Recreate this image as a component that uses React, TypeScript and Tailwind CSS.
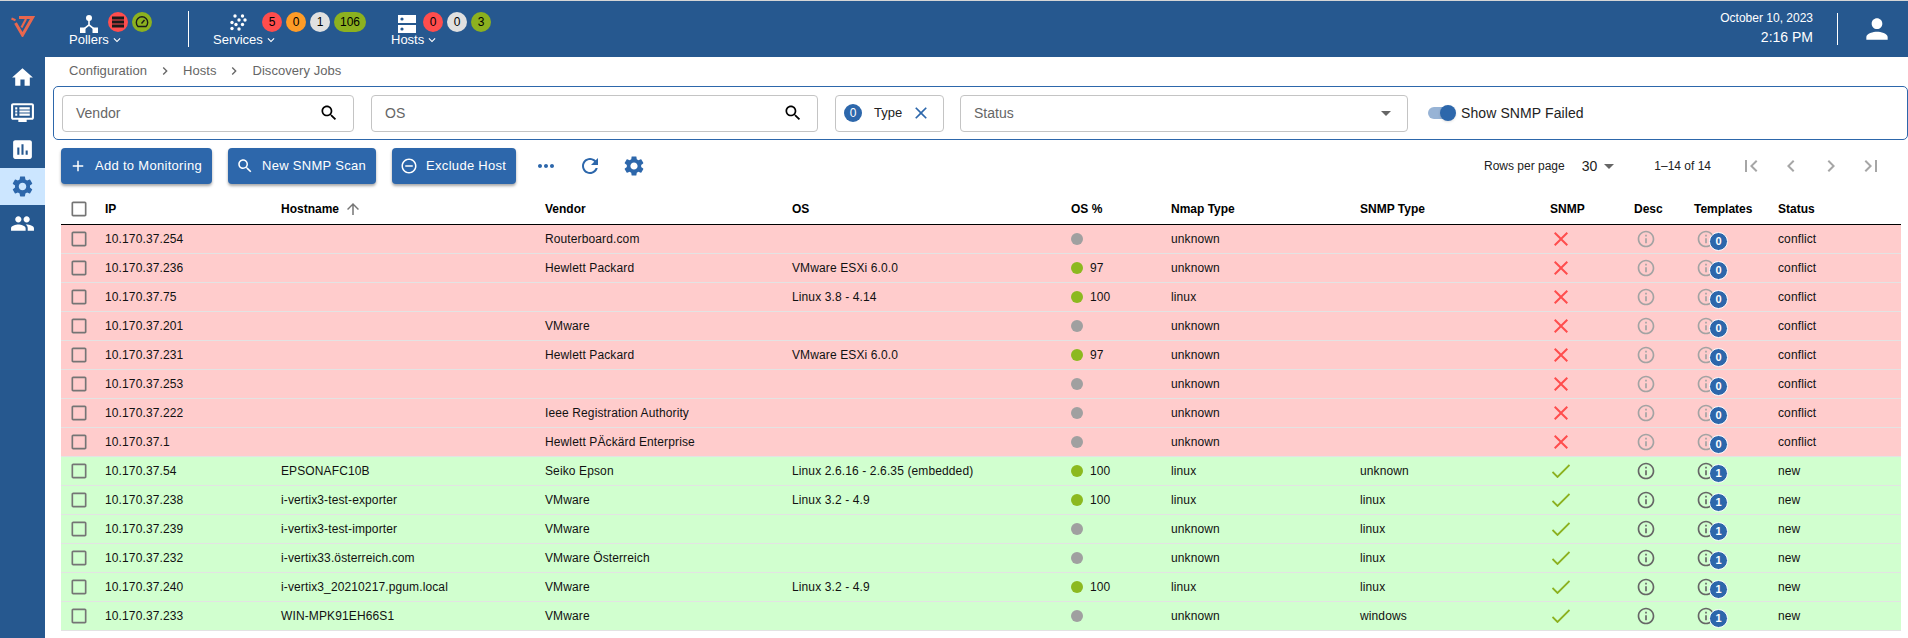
import React from 'react';

const P = {
  home: 'M10 20v-6h4v6h5v-8h3L12 3 2 12h3v8z',
  gear: 'M19.14 12.94c.04-.3.06-.61.06-.94 0-.32-.02-.64-.07-.94l2.03-1.58c.18-.14.23-.41.12-.61l-1.92-3.32c-.12-.22-.37-.29-.59-.22l-2.39.96c-.5-.38-1.03-.7-1.62-.94l-.36-2.54c-.04-.24-.24-.41-.48-.41h-3.84c-.24 0-.43.17-.47.41l-.36 2.54c-.59.24-1.13.57-1.62.94l-2.39-.96c-.22-.08-.47 0-.59.22L2.74 8.87c-.12.21-.08.47.12.61l2.03 1.58c-.05.3-.09.63-.09.94s.02.64.07.94l-2.03 1.58c-.18.14-.23.41-.12.61l1.92 3.32c.12.22.37.29.59.22l2.39-.96c.5.38 1.03.7 1.62.94l.36 2.54c.05.24.24.41.48.41h3.84c.24 0 .44-.17.47-.41l.36-2.54c.59-.24 1.13-.56 1.62-.94l2.39.96c.22.08.47 0 .59-.22l1.92-3.32c.12-.22.07-.47-.12-.61l-2.01-1.58zM12 15.6c-1.98 0-3.6-1.62-3.6-3.6s1.62-3.6 3.6-3.6 3.6 1.62 3.6 3.6-1.62 3.6-3.6 3.6z',
  person: 'M12 12c2.21 0 4-1.79 4-4s-1.79-4-4-4-4 1.79-4 4 1.79 4 4 4zm0 2c-2.67 0-8 1.34-8 4v2h16v-2c0-2.66-5.33-4-8-4z',
  people: 'M16 11c1.66 0 2.99-1.34 2.99-3S17.66 5 16 5c-1.66 0-3 1.34-3 3s1.34 3 3 3zm-8 0c1.66 0 2.99-1.34 2.99-3S9.66 5 8 5C6.34 5 5 6.34 5 8s1.34 3 3 3zm0 2c-2.33 0-7 1.17-7 3.5V19h14v-2.5c0-2.33-4.67-3.5-7-3.5zm8 0c-.29 0-.62.02-.97.05 1.16.84 1.97 1.97 1.97 3.45V19h6v-2.5c0-2.33-4.67-3.5-7-3.5z',
  chart: 'M19 3H5c-1.1 0-2 .9-2 2v14c0 1.1.9 2 2 2h14c1.1 0 2-.9 2-2V5c0-1.1-.9-2-2-2zM9 17H7v-7h2v7zm4 0h-2V7h2v10zm4 0h-2v-4h2v4z',
  search: 'M15.5 14h-.79l-.28-.27C15.41 12.59 16 11.11 16 9.5 16 5.91 13.09 3 9.5 3S3 5.91 3 9.5 5.91 16 9.5 16c1.61 0 3.09-.59 4.23-1.57l.27.28v.79l5 4.99L20.49 19l-4.99-5zm-6 0C7.01 14 5 11.99 5 9.5S7.01 5 9.5 5 14 7.01 14 9.5 11.99 14 9.5 14z',
  refresh: 'M17.65 6.35C16.2 4.9 14.21 4 12 4c-4.42 0-7.99 3.58-7.99 8s3.57 8 7.99 8c3.73 0 6.84-2.55 7.73-6h-2.08c-.82 2.33-3.04 4-5.65 4-3.31 0-6-2.69-6-6s2.69-6 6-6c1.66 0 3.14.69 4.22 1.78L13 11h7V4l-2.35 2.35z',
  more: 'M6 10c-1.1 0-2 .9-2 2s.9 2 2 2 2-.9 2-2-.9-2-2-2zm12 0c-1.1 0-2 .9-2 2s.9 2 2 2 2-.9 2-2-.9-2-2-2zm-6 0c-1.1 0-2 .9-2 2s.9 2 2 2 2-.9 2-2-.9-2-2-2z',
  first: 'M18.41 16.59L13.82 12l4.59-4.59L17 6l-6 6 6 6zM6 6h2v12H6z',
  last: 'M5.59 7.41L10.18 12l-4.59 4.59L7 18l6-6-6-6zM16 6h2v12h-2z',
  prev: 'M15.41 7.41L14 6l-6 6 6 6 1.41-1.41L10.83 12z',
  next: 'M10 6L8.59 7.41 13.17 12l-4.58 4.59L10 18l6-6z',
  add: 'M19 13h-6v6h-2v-6H5v-2h6V5h2v6h6v2z',
  minus: 'M7 11v2h10v-2H7zm5-9C6.48 2 2 6.48 2 12s4.48 10 10 10 10-4.48 10-10S17.52 2 12 2zm0 18c-4.41 0-8-3.59-8-8s3.59-8 8-8 8 3.59 8 8-3.59 8-8 8z',
  info: 'M11 7h2v2h-2zm0 4h2v6h-2zm1-9C6.48 2 2 6.48 2 12s4.48 10 10 10 10-4.48 10-10S17.52 2 12 2zm0 18c-4.41 0-8-3.59-8-8s3.59-8 8-8 8 3.59 8 8-3.59 8-8 8z',
  close: 'M19 6.41L17.59 5 12 10.59 6.41 5 5 6.41 10.59 12 5 17.59 6.41 19 12 13.41 17.59 19 19 17.59 13.41 12z',
  up: 'M4 12l1.41 1.41L11 7.83V20h2V7.83l5.58 5.59L20 12l-8-8-8 8z',
  box: 'M19 5v14H5V5h14m0-2H5c-1.1 0-2 .9-2 2v14c0 1.1.9 2 2 2h14c1.1 0 2-.9 2-2V5c0-1.1-.9-2-2-2z',
  drop: 'M7 10l5 5 5-5z',
  expand: 'M16.59 8.59L12 13.17 7.41 8.59 6 10l6 6 6-6z',
  screen: 'M21 3H3c-1.1 0-2 .9-2 2v12c0 1.1.9 2 2 2h5v2h8v-2h5c1.1 0 2-.9 2-2V5c0-1.1-.9-2-2-2zm0 14H3V5h18v12zM5 7h2v2H5zm0 3h2v2H5zm0 3h2v2H5zm4-6h10v2H9zm0 3h10v2H9zm0 3h10v2H9z',
};

const Icon = ({ d, className }: { d: string; className: string }) => (
  <svg viewBox="0 0 24 24" className={className} fill="currentColor">
    <path d={d} />
  </svg>
);

const Badge = ({ children, color, wide }: { children?: React.ReactNode; color: string; wide?: boolean }) => (
  <span className={`flex h-5 items-center justify-center rounded-full text-xs text-black ${wide ? 'w-8' : 'w-5'} ${color}`}>
    {children}
  </span>
);

const NavLabel = ({ text }: { text: string }) => (
  <div className="flex h-4 items-center text-[13px] text-white">
    {text}
    <Icon d={P.expand} className="ml-px h-3.5 w-3.5" />
  </div>
);

const SideItem = ({ d, active, down }: { d: string; active?: boolean; down?: boolean }) => (
  <div className={`flex h-[37px] items-center justify-center ${down ? 'pt-[3px]' : ''} ${active ? 'bg-[#cce6ff] text-[#2d67ab]' : 'text-white'}`}>
    <Icon d={d} className="h-[25px] w-[25px]" />
  </div>
);

const Crumb = ({ children }: { children: React.ReactNode }) => (
  <span className="text-[13px] tracking-[0.05px] text-[#666666]">{children}</span>
);

const CrumbSep = () => <Icon d={P.next} className="mx-2.5 h-4 w-4 text-[#666666]" />;

const SearchInput = ({ label, width }: { label: string; width: string }) => (
  <div className={`flex h-[37px] items-center justify-between rounded border border-[#c4c4c4] pl-[13px] pr-[14px] text-sm text-[#666666] ${width}`}>
    {label}
    <Icon d={P.search} className="h-5 w-5 text-black" />
  </div>
);

const ActionButton = ({ d, label }: { d: string; label: string }) => (
  <button className="flex h-9 items-center gap-2 rounded bg-[#2d67ab] pl-2 pr-2.5 text-[13px] tracking-[0.3px] text-white shadow-[0_2px_3px_rgba(0,0,0,0.35)]">
    <Icon d={d} className="h-[18px] w-[18px]" />
    {label}
  </button>
);

const gridCols = 'grid grid-cols-[44px_176px_264px_247px_279px_100px_189px_190px_84px_60px_84px_123px] items-center';

const headers = ['IP', 'Hostname', 'Vendor', 'OS', 'OS %', 'Nmap Type', 'SNMP Type', 'SNMP', 'Desc', 'Templates', 'Status'];

type Host = { ip: string; host?: string; vendor?: string; os?: string; pct?: number; nmap: string; snmp?: string };

const hosts: Host[] = [
  { ip: '10.170.37.254', vendor: 'Routerboard.com', nmap: 'unknown' },
  { ip: '10.170.37.236', vendor: 'Hewlett Packard', os: 'VMware ESXi 6.0.0', pct: 97, nmap: 'unknown' },
  { ip: '10.170.37.75', os: 'Linux 3.8 - 4.14', pct: 100, nmap: 'linux' },
  { ip: '10.170.37.201', vendor: 'VMware', nmap: 'unknown' },
  { ip: '10.170.37.231', vendor: 'Hewlett Packard', os: 'VMware ESXi 6.0.0', pct: 97, nmap: 'unknown' },
  { ip: '10.170.37.253', nmap: 'unknown' },
  { ip: '10.170.37.222', vendor: 'Ieee Registration Authority', nmap: 'unknown' },
  { ip: '10.170.37.1', vendor: 'Hewlett PÄckärd Enterprise', nmap: 'unknown' },
  { ip: '10.170.37.54', host: 'EPSONAFC10B', vendor: 'Seiko Epson', os: 'Linux 2.6.16 - 2.6.35 (embedded)', pct: 100, nmap: 'linux', snmp: 'unknown' },
  { ip: '10.170.37.238', host: 'i-vertix3-test-exporter', vendor: 'VMware', os: 'Linux 3.2 - 4.9', pct: 100, nmap: 'linux', snmp: 'linux' },
  { ip: '10.170.37.239', host: 'i-vertix3-test-importer', vendor: 'VMware', nmap: 'unknown', snmp: 'linux' },
  { ip: '10.170.37.232', host: 'i-vertix33.österreich.com', vendor: 'VMware Österreich', nmap: 'unknown', snmp: 'linux' },
  { ip: '10.170.37.240', host: 'i-vertix3_20210217.pgum.local', vendor: 'VMware', os: 'Linux 3.2 - 4.9', pct: 100, nmap: 'linux', snmp: 'linux' },
  { ip: '10.170.37.233', host: 'WIN-MPK91EH66S1', vendor: 'VMware', nmap: 'unknown', snmp: 'windows' },
];

const HostRow = ({ row }: { row: Host }) => {
  const ok = Boolean(row.snmp);
  const infoColor = ok ? 'text-[#666666]' : 'text-[#a3a3a3]';
  return (
    <div className={`${gridCols} h-[29px] border-b border-[#e3e3e3] text-xs tracking-[0.12px] text-[#111111] ${ok ? 'bg-[#d1ffcf]' : 'bg-[#ffcccc]'}`}>
      <div className="pl-2">
        <Icon d={P.box} className="h-5 w-5 text-[#757575]" />
      </div>
      <div>{row.ip}</div>
      <div>{row.host}</div>
      <div>{row.vendor}</div>
      <div>{row.os}</div>
      <div className="flex items-center">
        <span className={`h-3 w-3 rounded-full ${row.pct ? 'bg-[#8cb91f]' : 'bg-[#a0a0a0]'}`} />
        {row.pct && <span className="ml-[7px]">{row.pct}</span>}
      </div>
      <div>{row.nmap}</div>
      <div>{row.snmp}</div>
      <div>
        {ok ? (
          <svg viewBox="0 0 18 14" className="ml-0.5 h-3.5 w-[18px] text-[#8cb11f]" fill="none" stroke="currentColor" strokeWidth="1.8">
            <path d="M0.5 8 L5.5 13 L17.5 1" />
          </svg>
        ) : (
          <Icon d={P.close} className="-ml-px h-6 w-6 text-[#ff4d4d]" />
        )}
      </div>
      <div>
        <Icon d={P.info} className={`ml-0.5 h-5 w-5 ${infoColor}`} />
      </div>
      <div className="relative h-5">
        <Icon d={P.info} className={`ml-0.5 h-5 w-5 ${infoColor}`} />
        <span className="absolute left-[15px] top-[3px] flex h-[19px] w-[19px] items-center justify-center rounded-full border-[1.5px] border-white bg-[#2d67ab] text-[11px] font-bold text-white">
          {ok ? 1 : 0}
        </span>
      </div>
      <div>{ok ? 'new' : 'conflict'}</div>
    </div>
  );
};

const App: React.FC = () => {
  return (
    <div className="flex h-[638px] flex-col overflow-hidden border-t border-[#d5d5d5] bg-white font-['Liberation_Sans',Arial,sans-serif]">
      {/* Top bar */}
      <header className="flex h-14 shrink-0 bg-[#26588f]">
        <div className="flex w-[45px] justify-center pt-[15px]">
          <svg viewBox="0 0 24 21" className="h-[21px] w-6 text-[#e9674e]" fill="none" stroke="currentColor" strokeWidth="3">
            <path d="M0.5 2.5 L4.5 4.2" strokeWidth="2.2" />
            <path d="M4.5 7 L11.5 19 L21.5 1.5 H8" />
            <path d="M15 3 L10.5 11.5" strokeWidth="2.2" />
          </svg>
        </div>

        {/* Pollers */}
        <div className="ml-6 pt-2.5">
          <div className="flex h-[21px] items-center">
            <svg viewBox="0 0 18 18" className="ml-[11px] mt-1 h-[18px] w-[18px] text-white" fill="currentColor">
              <circle cx="9" cy="3" r="3" />
              <path d="M8.2 5h1.6v4.5l5 4-1 1.2-4.8-3.8-4.8 3.8-1-1.2 5-4z" />
              <rect x="0" y="12.5" width="5.5" height="5.5" />
              <rect x="12.5" y="12.5" width="5.5" height="5.5" />
            </svg>
            <div className="ml-2.5 flex gap-1">
              <Badge color="bg-[#ff4d4d]">
                <svg viewBox="0 0 12 12" className="h-3 w-3" fill="#1a1a1a">
                  <rect y="0.5" width="12" height="3" />
                  <rect y="4.5" width="12" height="3" />
                  <rect y="8.5" width="12" height="3" />
                </svg>
              </Badge>
              <Badge color="bg-[#8cb11f]">
                <svg viewBox="0 0 14 14" className="h-3.5 w-3.5" fill="none" stroke="#1a1a1a" strokeWidth="1.4">
                  <path d="M3 11.5 A5.7 5.7 0 1 1 11 11.5 Z" />
                  <path d="M6.5 8.5 L9.5 5" />
                </svg>
              </Badge>
            </div>
          </div>
          <NavLabel text="Pollers" />
        </div>

        <div className="ml-9 mt-2.5 h-9 w-px bg-white" />

        {/* Services */}
        <div className="ml-6 pt-2.5">
          <div className="flex h-[21px] items-center">
            <svg viewBox="0 0 17 17" className="ml-[17px] mt-[2px] h-[17px] w-[17px] text-white" fill="currentColor">
              <circle cx="5" cy="2" r="1.7" />
              <circle cx="12.5" cy="2" r="1.7" />
              <circle cx="9" cy="6" r="1.7" />
              <circle cx="15" cy="6" r="1.7" />
              <circle cx="2" cy="8.5" r="1.7" />
              <circle cx="6" cy="10.5" r="1.7" />
              <circle cx="12.5" cy="10.5" r="1.7" />
              <circle cx="2" cy="14.5" r="1.7" />
              <circle cx="9" cy="15" r="1.7" />
            </svg>
            <div className="ml-[15px] flex gap-1">
              <Badge color="bg-[#ff4d4d]">5</Badge>
              <Badge color="bg-[#ff9c27]">0</Badge>
              <Badge color="bg-[#e0e0e0]">1</Badge>
              <Badge color="bg-[#8cb11f]" wide>106</Badge>
            </div>
          </div>
          <NavLabel text="Services" />
        </div>

        {/* Hosts */}
        <div className="ml-[25px] pt-2.5">
          <div className="flex h-[21px] items-center">
            <svg viewBox="0 0 18 18" className="ml-[7px] mt-1 h-[18px] w-[18px]">
              <rect width="18" height="8" fill="#ffffff" />
              <rect y="10" width="18" height="8" fill="#ffffff" />
              <circle cx="4" cy="4" r="1.6" fill="#26588f" />
              <circle cx="4" cy="14" r="1.6" fill="#26588f" />
            </svg>
            <div className="ml-[7px] flex gap-1">
              <Badge color="bg-[#ff4d4d]">0</Badge>
              <Badge color="bg-[#e0e0e0]">0</Badge>
              <Badge color="bg-[#8cb11f]">3</Badge>
            </div>
          </div>
          <NavLabel text="Hosts" />
        </div>

        <div className="ml-auto mt-[9px] flex flex-col items-end text-white">
          <div className="text-xs leading-4">October 10, 2023</div>
          <div className="mt-px text-sm leading-5">2:16 PM</div>
        </div>
        <div className="ml-6 mt-3 h-8 w-px bg-white" />
        <div className="ml-[23px] mr-[15px] pt-3">
          <Icon d={P.person} className="h-8 w-8 text-white" />
        </div>
      </header>

      <div className="flex min-h-0 flex-1">
        {/* Left rail */}
        <aside className="w-[45px] shrink-0 bg-[#26588f]">
          <SideItem d={P.home} down />
          <SideItem d={P.screen} />
          <SideItem d={P.chart} />
          <SideItem d={P.gear} active />
          <SideItem d={P.people} />
        </aside>

        <main className="min-w-0 flex-1">
          {/* Breadcrumbs */}
          <div className="mb-0.5 flex h-[27px] items-center pl-6">
            <Crumb>Configuration</Crumb>
            <CrumbSep />
            <Crumb>Hosts</Crumb>
            <CrumbSep />
            <Crumb>Discovery Jobs</Crumb>
          </div>

          {/* Filters */}
          <div className="ml-2 flex h-[54px] items-center rounded-[5px] border border-[#2d67ab] pl-2">
            <SearchInput label="Vendor" width="w-[292px]" />
            <div className="ml-[17px]">
              <SearchInput label="OS" width="w-[447px]" />
            </div>
            <div className="ml-[17px] flex h-[37px] w-[109px] items-center rounded border border-[#c4c4c4] pl-2 text-[13px] text-[#222222]">
              <span className="flex h-[18px] w-[18px] items-center justify-center rounded-full bg-[#2d67ab] text-xs text-white">0</span>
              <span className="ml-[12px]">Type</span>
              <Icon d={P.close} className="ml-[9px] h-5 w-5 text-[#2d67ab]" />
            </div>
            <div className="ml-[16px] flex h-[37px] w-[448px] items-center justify-between rounded border border-[#c4c4c4] pl-[13px] pr-[9px] text-sm text-[#666666]">
              Status
              <Icon d={P.drop} className="h-6 w-6 text-[#666666]" />
            </div>
            <div className="relative ml-5 h-[12px] w-[25px] rounded-full bg-[#97b3d5]">
              <span className="absolute -top-[2px] left-[12px] h-4 w-4 rounded-full bg-[#2d67ab] shadow-sm" />
            </div>
            <span className="ml-[8px] text-sm tracking-[0.1px] text-[#222222]">Show SNMP Failed</span>
          </div>

          {/* Actions and pagination */}
          <div className="ml-4 mt-2 flex h-9 items-center">
            <div className="flex gap-4">
              <ActionButton d={P.add} label="Add to Monitoring" />
              <ActionButton d={P.search} label="New SNMP Scan" />
              <ActionButton d={P.minus} label="Exclude Host" />
            </div>
            <Icon d={P.more} className="ml-[18px] h-6 w-6 text-[#2d67ab]" />
            <Icon d={P.refresh} className="ml-5 h-6 w-6 text-[#2d67ab]" />
            <Icon d={P.gear} className="ml-5 h-6 w-6 text-[#2d67ab]" />
            <div className="ml-auto mr-[25px] flex items-center text-xs text-[#222222]">
              <span>Rows per page</span>
              <span className="ml-[17px] text-sm">30</span>
              <Icon d={P.drop} className="h-6 w-6 text-[#666666]" />
              <span className="ml-[33px]">1–14 of 14</span>
              <div className="ml-7 flex gap-4 text-[#a6a6a6]">
                <Icon d={P.first} className="h-6 w-6" />
                <Icon d={P.prev} className="h-6 w-6" />
                <Icon d={P.next} className="h-6 w-6" />
                <Icon d={P.last} className="h-6 w-6" />
              </div>
            </div>
          </div>

          {/* Hosts table */}
          <div className="ml-4 w-[1840px]">
            <div className={`${gridCols} h-[41px] border-b border-black pt-2.5 text-xs font-bold text-black`}>
              <div className="pl-2">
                <Icon d={P.box} className="h-5 w-5 text-[#757575]" />
              </div>
              {headers.map((h) => (
                <div key={h} className="flex items-center">
                  {h}
                  {h === 'Hostname' && <Icon d={P.up} className="ml-[5px] h-[18px] w-[18px] text-[#757575]" />}
                </div>
              ))}
            </div>
            {hosts.map((row) => (
              <HostRow key={row.ip} row={row} />
            ))}
          </div>
        </main>
      </div>
    </div>
  );
};

export default App;
